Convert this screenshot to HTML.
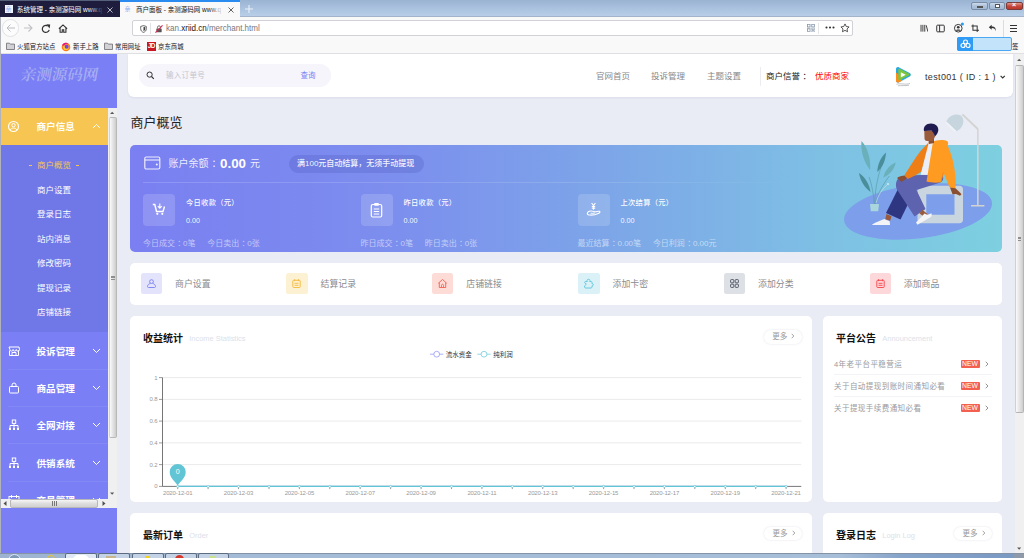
<!DOCTYPE html>
<html lang="zh-CN">
<head>
<meta charset="utf-8">
<title>商户面板 - 亲测源码网</title>
<style>
*{box-sizing:border-box;margin:0;padding:0}
html,body{width:1024px;height:558px;overflow:hidden;background:#e9ebf5;font-family:"Liberation Sans","Noto Sans CJK SC",sans-serif;}
body{position:relative}
.abs{position:absolute}
.t{position:absolute;white-space:nowrap;line-height:1}
/* ---------- browser chrome ---------- */
#titlebar{left:0;top:0;width:1024px;height:17.300px;background:linear-gradient(#9ab3d2,#a8c0dd 45%,#b8cee8);border-bottom:1px solid #a2b3ca}
#tab1{left:0;top:0;width:120px;height:17px;background:#1e1d3e;border-top:1px solid #55607a}
#tab2{left:120px;top:0;width:119.500px;height:17px;background:#f9f9fa;border-top:2px solid #2a8cf0}
#navbar{left:0;top:17px;width:1024px;height:23px;background:#f9f9fa}
#urlbar{left:132px;top:20px;width:721px;height:16px;background:#fff;border:1px solid #d2d2d6;border-radius:2px}
#bmbar{left:0;top:40px;width:1024px;height:14px;background:#f9f9fa;border-bottom:1px solid #e0e0e4}
/* ---------- page ---------- */
#sidebar{left:1px;top:54px;width:116px;height:499px;background:#7b7ff5;overflow:hidden}
#taskbar{left:0;top:552.600px;width:1024px;height:6px;overflow:hidden;background:linear-gradient(90deg,#9db3cf 0,#a4bbd7 23%,#a7bed9 82%,#86a3c9 88%,#7a99c3 98.900%,#8e9aaa 99.100%)}
.card{position:absolute;background:#fff;border-radius:5px}
.sub{position:absolute;left:36px;color:#fff;font-size:8.5px;line-height:1;white-space:nowrap}
.mm{position:absolute;left:35.500px;color:#fff;font-size:9.6px;font-weight:bold;line-height:1;white-space:nowrap}
.sep{position:absolute;left:7px;width:100px;height:1px;background:rgba(255,255,255,.07)}
</style>
</head>
<body>
<!-- BROWSER CHROME -->
<div class="abs" id="titlebar">
 <!-- window buttons -->
 <div class="abs" style="left:971px;top:1.500px;width:16.500px;height:8.500px;border:1px solid #7a8ca6;border-radius:2px;background:linear-gradient(#cddaeb,#adc1da 50%,#a3b8d3)"><div class="abs" style="left:5px;top:3px;width:6px;height:2px;background:#fff;border:.5px solid #555"></div></div>
 <div class="abs" style="left:989px;top:1.500px;width:16px;height:8.500px;border:1px solid #7a8ca6;border-radius:2px;background:linear-gradient(#cddaeb,#adc1da 50%,#a3b8d3)"><div class="abs" style="left:5px;top:1px;width:5px;height:4px;border:1px solid #555;background:#fff"></div></div>
 <div class="abs" style="left:1006px;top:1.500px;width:17px;height:8.500px;border:1px solid #7a3a36;border-radius:2px;background:linear-gradient(#e19a90,#c6483a 50%,#b8382b)"><div class="t" style="left:5px;top:-1.5px;font-size:7px;font-weight:bold;color:#fff">×</div></div>
 <svg class="abs" style="left:244.500px;top:4.800px" width="8" height="8" viewBox="0 0 8 8"><path d="M4 0V8M0 4H8" stroke="#eaf1fa" stroke-width="1.050"/></svg>
</div>
<div class="abs" id="tab1">
 <div class="abs" style="left:5px;top:4px;width:8px;height:8px;background:#eef3ff"></div><div class="t" style="left:5.5px;top:5px;font-size:6px;color:#8fb0f0">亲</div>
 <div class="t" style="left:17px;top:5.500px;font-size:6.5px;color:#fff">系统管理 - 亲测源码网 www.q</div>
 <div class="abs" style="left:88px;top:2px;width:16px;height:13px;background:linear-gradient(90deg,rgba(30,29,62,0),#1e1d3e)"></div>
 <svg class="abs" style="left:107px;top:6px" width="6" height="6" viewBox="0 0 6 6"><path d="M.5 .5L5.5 5.5M5.5 .5L.5 5.5" stroke="#e8e8f0" stroke-width=".75" fill="none"/></svg>
</div>
<div class="abs" id="tab2">
 <div class="t" style="left:4.5px;top:4px;font-size:6px;color:#8fb0f0">亲</div>
 <div class="t" style="left:16px;top:4.500px;font-size:6.5px;color:#111">商户面板 - 亲测源码网 www.q</div>
 <div class="abs" style="left:88px;top:1px;width:16px;height:13px;background:linear-gradient(90deg,rgba(249,249,250,0),#f9f9fa)"></div>
 <svg class="abs" style="left:108px;top:5px" width="6" height="6" viewBox="0 0 6 6"><path d="M.5 .5L5.5 5.5M5.5 .5L.5 5.5" stroke="#333" stroke-width=".75" fill="none"/></svg>
</div>
<div class="abs" id="navbar">
 <!-- back -->
 <div class="abs" style="left:2px;top:2.200px;width:17.400px;height:17.400px;border:1px solid #e2e2e6;border-radius:50%;background:#fcfcfd"></div>
 <svg class="abs" style="left:6px;top:6px" width="10" height="10" viewBox="0 0 10 10"><path d="M9 5H1.5M4.5 1.5L1 5l3.500 3.500" stroke="#bcbcc1" stroke-width="1" fill="none"/></svg>
 <svg class="abs" style="left:23px;top:6px" width="10" height="10" viewBox="0 0 10 10"><path d="M1 5h7.500M5.500 1.500L9 5 5.500 8.500" stroke="#c2c2c6" stroke-width="1.100" fill="none"/></svg>
 <!-- reload -->
 <svg class="abs" style="left:41px;top:6.500px" width="10" height="10" viewBox="0 0 10 10"><path d="M8.200 5.800A3.500 3.500 0 1 1 6.600 1.900" stroke="#333" stroke-width="1.200" fill="none"/><path d="M5.300 .2L9.200 .6 8.600 4.400z" fill="#333"/></svg>
 <!-- home -->
 <svg class="abs" style="left:57.500px;top:6.700px" width="10" height="9.100" viewBox="0 0 11 10"><path d="M1 5.200L5.500 1 10 5.200M2.300 4.500V9h2.400V6.300h1.600V9h2.400V4.500" stroke="#333" stroke-width="1.200" fill="none"/></svg>
 <!-- right icons -->
 <svg class="abs" style="left:919.500px;top:7px" width="8.500" height="8.500" viewBox="0 0 10 10"><path d="M1.200 1v8M3.400 1v8M5.600 1v8M7.300 1.500L9.300 9" stroke="#333" stroke-width="1.100" fill="none"/></svg>
 <svg class="abs" style="left:936px;top:6.500px" width="9" height="9" viewBox="0 0 10 10"><rect x=".8" y="1.300" width="8.400" height="7.400" rx="1" stroke="#333" stroke-width="1.100" fill="none"/><path d="M4 1.300v7.400" stroke="#333" stroke-width="1.100"/></svg>
 <svg class="abs" style="left:953px;top:5px" width="11.500" height="11.500" viewBox="0 0 12 12"><circle cx="5.500" cy="6.500" r="4" stroke="#333" stroke-width="1" fill="none"/><circle cx="5.500" cy="5.500" r="1.400" fill="#333"/><path d="M2.800 9.200c.5-1.800 4.900-1.800 5.400 0" fill="#333"/><circle cx="9.800" cy="2" r="1.600" fill="#2a9df4"/></svg>
 <svg class="abs" style="left:970.500px;top:7px" width="8.500" height="8.500" viewBox="0 0 11 11"><path d="M2.500 .5v7.500h8M.5 2.500h7.500v8" stroke="#333" stroke-width="1.300" fill="none"/></svg>
 <svg class="abs" style="left:987.500px;top:7px" width="9" height="8.200" viewBox="0 0 11 10"><path d="M4.500 1L1 4l3.500 3V5c3 0 4.500 1 4.800 4 .8-4-1-6-4.800-6z" fill="#333"/></svg>
 <div class="abs" style="left:1003px;top:3px;width:1px;height:17px;background:#dcdce0"></div>
 <div class="abs" style="left:1010px;top:7.500px;width:7px;height:1.100px;background:#333"></div><div class="abs" style="left:1010px;top:10.500px;width:7px;height:1.100px;background:#333"></div><div class="abs" style="left:1010px;top:13.500px;width:7px;height:1.100px;background:#333"></div>
</div>
<div class="abs" id="urlbar">
 <svg class="abs" style="left:6.500px;top:3.500px" width="7" height="8" viewBox="0 0 8 9"><path d="M4 .6l3.200 1v2.600C7.200 6.400 5.800 7.800 4 8.400 2.200 7.800.8 6.400.8 4.200V1.600z" stroke="#444" stroke-width=".9" fill="none"/><path d="M4 2v5c1.200-.5 2-1.500 2-3V2.600z" fill="#444"/></svg>
 <div class="abs" style="left:17px;top:2px;width:1px;height:11px;background:#e2e2e6"></div>
 <svg class="abs" style="left:21.500px;top:3.500px" width="8" height="8" viewBox="0 0 9 9"><rect x="1.500" y="3.800" width="6" height="4.400" rx=".6" fill="#555"/><path d="M2.800 3.800V2.600a1.700 1.700 0 0 1 3.400 0v1.200" stroke="#555" stroke-width=".9" fill="none"/><path d="M.5 8.500L8.500 .5" stroke="#e22850" stroke-width="1.200"/></svg>
 <div class="t" style="left:33px;top:2.700px;font-size:8.700px;color:#77777c;transform:scaleX(.925);transform-origin:0 50%">kan.<span style="color:#15141a">xriid.cn</span>/merchant.html</div>
 <!-- qr -->
 <svg class="abs" style="left:674.200px;top:3.300px" width="7.800" height="7.800" viewBox="0 0 9 9" fill="#8b99ad"><path d="M0 0h4v4H0zM1 1v2h2V1zM5 0h4v4H5zM6 1v2h2V1zM0 5h4v4H0zM1 6v2h2V6zM5 5h1.500v1.500H5zM7.500 5H9v1.500H7.500zM6.200 6.300h1.500v1.500H6.200zM5 7.500h1.500V9H5zM7.500 7.500H9V9H7.500z"/></svg>
 <div class="abs" style="left:685px;top:2px;width:1px;height:11px;background:#e6e6ea"></div>
 <svg class="abs" style="left:691.800px;top:5.400px" width="10" height="3" viewBox="0 0 10 3"><circle cx="1.500" cy="1.500" r="1.050" fill="#333"/><circle cx="5" cy="1.500" r="1.050" fill="#333"/><circle cx="8.500" cy="1.500" r="1.050" fill="#333"/></svg>
 <svg class="abs" style="left:707px;top:2px" width="10" height="10" viewBox="0 0 11 11"><path d="M5.500 1l1.400 2.900 3.100.4-2.300 2.200.6 3.100-2.800-1.500-2.800 1.500.6-3.100L1 4.300l3.100-.4z" stroke="#333" stroke-width=".9" fill="none" stroke-linejoin="round"/></svg>
</div>
<div class="abs" id="bmbar">
 <svg class="abs" style="left:6px;top:2.300px" width="9" height="8" viewBox="0 0 9 8"><path d="M.5 1.200h3l.8.900h4.200v5.400h-8z" fill="#d2d2d6" stroke="#6c6c70" stroke-width=".8"/></svg>
 <div class="t" style="left:17px;top:3.600px;font-size:6.4px;color:#15141a">火狐官方站点</div>
 <svg class="abs" style="left:61px;top:2px" width="10" height="10" viewBox="0 0 10 10"><circle cx="5" cy="5" r="4.300" fill="#ff7a1a"/><circle cx="5" cy="5.300" r="2.800" fill="#ffcf2e"/><circle cx="5.600" cy="4.700" r="2" fill="#7542e5"/><path d="M1 3.500c1-2.500 4-3.500 6.500-1.800-2-.3-3.500.4-4 1.800z" fill="#e31587"/></svg>
 <div class="t" style="left:73px;top:3.600px;font-size:6.4px;color:#15141a">新手上路</div>
 <svg class="abs" style="left:104px;top:2.300px" width="9" height="8" viewBox="0 0 9 8"><path d="M.5 1.200h3l.8.900h4.200v5.400h-8z" fill="#d2d2d6" stroke="#6c6c70" stroke-width=".8"/></svg>
 <div class="t" style="left:115px;top:3.600px;font-size:6.4px;color:#15141a">常用网址</div>
 <div class="abs" style="left:147px;top:2px;width:9px;height:9px;background:#c91623"></div><div class="t" style="left:147.700px;top:3.200px;font-size:6.500px;font-weight:bold;color:#fff;letter-spacing:-.5px">JD</div>
 <div class="t" style="left:158px;top:3.600px;font-size:6.4px;color:#15141a">京东商城</div>
 <!-- cloud extension badge -->
 <div class="abs" style="left:957px;top:-3px;width:55px;height:14px;border-radius:2px;background:#c3e3fb;border:1px solid #4aa8f5"></div>
 <div class="abs" style="left:957px;top:-3px;width:16px;height:14px;border-radius:2px 0 0 2px;background:#2f9bf5"></div>
 <svg class="abs" style="left:960px;top:-1px" width="11" height="10" viewBox="0 0 11 10"><circle cx="5.500" cy="3" r="2" stroke="#fff" stroke-width="1.200" fill="none"/><circle cx="3" cy="6.500" r="2" stroke="#fff" stroke-width="1.200" fill="none"/><circle cx="8" cy="6.500" r="2" stroke="#fff" stroke-width="1.200" fill="none"/></svg>
 <div class="t" style="left:1012px;top:3.600px;font-size:6.4px;color:#15141a">签</div>
</div>
<!-- PAGE -->
<div class="abs" id="sidebar">
 <!-- logo -->
 <div class="t" style="left:20px;top:12.500px;font-size:15.500px;font-family:'Liberation Serif','Noto Serif CJK SC',serif;color:rgba(196,208,240,.6);transform:skewX(-10deg);letter-spacing:0;font-weight:600">亲测源码网</div>
 <!-- active main -->
 <div class="abs" style="left:0;top:54px;width:107px;height:37px;background:#f7c552"></div>
 <svg class="abs" style="left:6px;top:66px" width="13" height="13" viewBox="0 0 13 13"><circle cx="6.500" cy="6.500" r="5" stroke="#fff" stroke-width="1.100" fill="none"/><circle cx="6.500" cy="5.200" r="1.700" stroke="#fff" stroke-width="1" fill="none"/><path d="M3.300 10c.4-2.600 6-2.600 6.400 0" stroke="#fff" stroke-width="1" fill="none"/></svg>
 <div class="mm" style="top:67.500px">商户信息</div>
 <svg class="abs" style="left:91px;top:69px" width="9" height="6" viewBox="0 0 9 6"><path d="M1 5L4.500 1.500 8 5" stroke="#fff" stroke-width="1" fill="none"/></svg>
 <!-- submenu -->
 <div class="abs" style="left:0;top:91px;width:107px;height:187px;background:#7078e8"></div>
 <div class="sub" style="top:107px;color:#f7c552">商户概览</div>
 <div class="abs" style="left:28px;top:111px;width:3px;height:1px;background:#f7c552"></div><div class="abs" style="left:75px;top:111px;width:3px;height:1px;background:#f7c552"></div>
 <div class="sub" style="top:131.500px">商户设置</div>
 <div class="sub" style="top:156px">登录日志</div>
 <div class="sub" style="top:180.500px">站内消息</div>
 <div class="sub" style="top:205px">修改密码</div>
 <div class="sub" style="top:229.500px">提现记录</div>
 <div class="sub" style="top:254px">店铺链接</div>
 <!-- main items -->
 <svg class="abs" style="left:7px;top:291px" width="12" height="12" viewBox="0 0 12 12"><path d="M1.500 5.500V10.500h9V5.500M1 2h10l.5 2.500a1.600 1.600 0 0 1-3.200 0 1.600 1.600 0 0 1-3.200 0 1.600 1.600 0 0 1-3.200 0zM4 10.500V7.500h4v3" stroke="#fff" stroke-width="1" fill="none"/></svg>
 <div class="mm" style="top:292.500px">投诉管理</div>
 <svg class="abs" style="left:91px;top:294px" width="9" height="6" viewBox="0 0 9 6"><path d="M1 1l3.500 3.500L8 1" stroke="#fff" stroke-width="1" fill="none"/></svg>
 <div class="sep" style="top:315px"></div>
 <svg class="abs" style="left:7px;top:328px" width="12" height="12" viewBox="0 0 12 12"><rect x="1.500" y="4.500" width="9" height="6.500" rx=".8" stroke="#fff" stroke-width="1" fill="none"/><path d="M4 4.500V3a2 2 0 0 1 4 0v1.500" stroke="#fff" stroke-width="1" fill="none"/></svg>
 <div class="mm" style="top:329.500px">商品管理</div>
 <svg class="abs" style="left:91px;top:331px" width="9" height="6" viewBox="0 0 9 6"><path d="M1 1l3.500 3.500L8 1" stroke="#fff" stroke-width="1" fill="none"/></svg>
 <div class="sep" style="top:352px"></div>
 <svg class="abs" style="left:7px;top:365px" width="12" height="12" viewBox="0 0 12 12"><rect x="4.300" y="1" width="3.400" height="3.400" stroke="#fff" stroke-width="1" fill="none"/><path d="M6 4.400V6.500M2 9V6.500h8V9M6 6.500V9" stroke="#fff" stroke-width="1" fill="none"/><rect x="1" y="9" width="2" height="2" fill="#fff"/><rect x="5" y="9" width="2" height="2" fill="#fff"/><rect x="9" y="9" width="2" height="2" fill="#fff"/></svg>
 <div class="mm" style="top:366.500px">全网对接</div>
 <svg class="abs" style="left:91px;top:368px" width="9" height="6" viewBox="0 0 9 6"><path d="M1 1l3.500 3.500L8 1" stroke="#fff" stroke-width="1" fill="none"/></svg>
 <div class="sep" style="top:389px"></div>
 <svg class="abs" style="left:7px;top:403px" width="12" height="12" viewBox="0 0 12 12"><rect x="4.300" y="1" width="3.400" height="3.400" stroke="#fff" stroke-width="1" fill="none"/><path d="M6 4.400V6.500M2 9V6.500h8V9M6 6.500V9" stroke="#fff" stroke-width="1" fill="none"/><rect x="1" y="9" width="2" height="2" fill="#fff"/><rect x="5" y="9" width="2" height="2" fill="#fff"/><rect x="9" y="9" width="2" height="2" fill="#fff"/></svg>
 <div class="mm" style="top:404.500px">供销系统</div>
 <svg class="abs" style="left:91px;top:406px" width="9" height="6" viewBox="0 0 9 6"><path d="M1 1l3.500 3.500L8 1" stroke="#fff" stroke-width="1" fill="none"/></svg>
 <div class="sep" style="top:427px"></div>
 <svg class="abs" style="left:7px;top:440px" width="12" height="12" viewBox="0 0 12 12"><rect x="1" y="2.500" width="10" height="8" stroke="#fff" stroke-width="1" fill="none"/><path d="M3.500 1v3M8.500 1v3M1 6h10" stroke="#fff" stroke-width="1" fill="none"/></svg>
 <div class="mm" style="top:441.500px">交易管理</div>
 <svg class="abs" style="left:91px;top:443px" width="9" height="6" viewBox="0 0 9 6"><path d="M1 1l3.500 3.500L8 1" stroke="#fff" stroke-width="1" fill="none"/></svg>
 <!-- vertical scrollbar of sidebar -->
 <div class="abs" style="left:107px;top:54px;width:9px;height:391px;background:#f0f0f0"></div>
 <div class="abs" style="left:108px;top:63px;width:8px;height:321px;border:1px solid #b8b8b8;border-left-color:#d4d4d4;border-radius:2px;background:linear-gradient(90deg,#fafafa,#e4e4e4 45%,#cdcdcd)"></div>
 <svg class="abs" style="left:109px;top:57px" width="4.400" height="3.500" viewBox="0 0 5 4"><path d="M0 3.500L2.500 .8 5 3.500z" fill="#5a5a5a"/></svg>
 <svg class="abs" style="left:109px;top:438px" width="4.400" height="3.500" viewBox="0 0 5 4"><path d="M0 .5L2.500 3.200 5 .5z" fill="#5a5a5a"/></svg>
 <div class="abs" style="left:110px;top:221.500px;width:3.500px;height:.8px;background:#8e8e8e"></div><div class="abs" style="left:110px;top:223px;width:3.500px;height:.8px;background:#8e8e8e"></div><div class="abs" style="left:110px;top:224.500px;width:3.500px;height:.8px;background:#8e8e8e"></div>
 <!-- horizontal scrollbar -->
 <div class="abs" style="left:0;top:445px;width:116px;height:9px;background:#f0f0f0"></div>
 <div class="abs" style="left:9px;top:445px;width:88px;height:9px;border:1px solid #b8b8b8;border-radius:2px;background:linear-gradient(#f6f6f6,#dedede 50%,#d0d0d0)"></div>
 <svg class="abs" style="left:2px;top:447px" width="4" height="5" viewBox="0 0 4 5"><path d="M3.500 0L.5 2.500 3.500 5z" fill="#505050"/></svg>
 <svg class="abs" style="left:101px;top:447px" width="4" height="5" viewBox="0 0 4 5"><path d="M.5 0L3.500 2.500 .5 5z" fill="#505050"/></svg>
 <div class="abs" style="left:51px;top:447px;width:1px;height:5px;background:#777"></div><div class="abs" style="left:53px;top:447px;width:1px;height:5px;background:#777"></div><div class="abs" style="left:55px;top:447px;width:1px;height:5px;background:#777"></div>
</div>
<div class="card" id="header" style="left:128px;top:54px;width:885px;height:43px;border-radius:0 0 6px 6px;box-shadow:0 1px 2px rgba(150,155,190,.15)">
 <div class="abs" style="left:10.500px;top:9.500px;width:192px;height:23.500px;border-radius:12px;background:#f5f5fb"></div>
 <svg class="abs" style="left:18px;top:16.500px" width="9" height="9" viewBox="0 0 9 9"><circle cx="3.600" cy="3.600" r="2.600" stroke="#333" stroke-width="1" fill="none"/><path d="M5.500 5.500L7.800 7.800" stroke="#333" stroke-width="1.100"/></svg>
 <div class="t" style="left:38px;top:17.500px;font-size:7.500px;color:#c4c4cc;letter-spacing:.3px">输入订单号</div>
 <div class="t" style="left:172.500px;top:17.500px;font-size:7.500px;color:#7b7ff5">查询</div>
 <div class="t" style="left:468px;top:18px;font-size:8.500px;color:#888">官网首页</div>
 <div class="t" style="left:523px;top:18px;font-size:8.500px;color:#888">投诉管理</div>
 <div class="t" style="left:579px;top:18px;font-size:8.500px;color:#888">主题设置</div>
 <div class="abs" style="left:632px;top:13px;width:1px;height:19px;background:#ececf2"></div>
 <div class="t" style="left:638px;top:18px;font-size:8.500px;color:#222">商户信誉<span style="position:relative;left:2.500px">：</span></div>
 <div class="t" style="left:687px;top:18px;font-size:8.500px;color:#f00">优质商家</div>
 <!-- avatar -->
 <svg class="abs" style="left:767px;top:12px" width="17" height="21" viewBox="0 0 17 21"><path d="M1 3.200C1 1.400 2.600.6 4.100 1.400l10.600 5.700c1.500.8 1.500 2.600 0 3.400L4.100 16.200c-1.500.8-3.100 0-3.100-1.800z" fill="#2aa7e1"/><path d="M1 6.500c2.500 1.500 5 4.500 6 8.200l-2.900 1.500c-1.500.8-3.100 0-3.100-1.800z" fill="#ff8c1a"/><path d="M3.300 3.600c0-.7.700-1.100 1.300-.8l9 4.800c.8.400.8 1.400 0 1.800l-9 4.800c-.6.300-1.300-.1-1.300-.8z" fill="#7cc53d"/><path d="M5.800 6.200v5.200l4.900-2.600z" fill="#fff"/><path d="M1.500 18.300c2-.8 4-.5 6.500-.3s4.500.3 7-.5M3 19.800c3-.5 7 .2 11-.6" stroke="#b9bcc2" stroke-width=".9" fill="none"/></svg>
 <div class="t" style="left:797px;top:18.500px;font-size:9px;letter-spacing:.35px;color:#333">test001 ( ID : 1 )</div>
 <svg class="abs" style="left:872.300px;top:21.300px" width="5.400" height="4" viewBox="0 0 5.400 4"><path d="M.6 .8L2.700 2.900 4.800 .8" stroke="#333" stroke-width="1.150" fill="none"/></svg>
</div>
<div class="t" style="left:130.500px;top:115.500px;font-size:13px;color:#222">商户概览</div>
<div class="abs" id="banner" style="left:130px;top:145px;width:872px;height:106.500px;border-radius:5px;background:linear-gradient(90deg,#7a7ff1 0%,#7c8eee 30%,#7da6e8 55%,#7ec0e4 80%,#7dd0e0 100%)">
 <!-- wallet -->
 <svg class="abs" style="left:14px;top:10.500px" width="17" height="14" viewBox="0 0 17 14"><rect x=".8" y="1" width="15" height="12" rx="1.500" stroke="#fff" stroke-opacity=".85" stroke-width="1.200" fill="none"/><path d="M.8 4h15" stroke="#fff" stroke-opacity=".85" stroke-width="1.100"/><circle cx="12.800" cy="8.500" r="1" fill="#fff" fill-opacity=".9"/></svg>
 <div class="t" style="left:38.500px;top:13.500px;font-size:10px;color:rgba(255,255,255,.88)">账户余额<span style="position:relative;left:3px">：</span></div>
 <div class="t" style="left:90px;top:11.500px;font-size:13.400px;font-weight:bold;color:#fff">0.00</div>
 <div class="t" style="left:120px;top:13.500px;font-size:10px;color:rgba(255,255,255,.88)">元</div>
 <div class="abs" style="left:159px;top:9.500px;width:135px;height:18.500px;border-radius:10px;background:rgba(60,70,170,.2)"></div>
 <div class="t" style="left:167px;top:14.500px;font-size:8px;font-weight:500;color:rgba(255,255,255,.92)">满100元自动结算，无须手动提现</div>
 <div class="abs" style="left:13px;top:37px;width:660px;height:1px;background:linear-gradient(90deg,rgba(255,255,255,.16),rgba(255,255,255,.12) 70%,rgba(255,255,255,0))"></div>
 <!-- col 1 -->
 <div class="abs" style="left:13px;top:49px;width:32px;height:32px;border-radius:4px;background:rgba(255,255,255,.16)"></div>
 <svg class="abs" style="left:22px;top:57px" width="14" height="14" viewBox="0 0 14 14"><path d="M.8 2.500h2l1.700 7h6.500l1.500-5" stroke="#fff" stroke-width="1.400" fill="none"/><circle cx="5.300" cy="11.800" r="1.100" fill="#fff"/><circle cx="10.300" cy="11.800" r="1.100" fill="#fff"/><path d="M7.800 1.500v4.500M5.800 4.200l2 2 2-2" stroke="#fff" stroke-width="1.100" fill="none"/></svg>
 <div class="t" style="left:56px;top:54px;font-size:7.300px;font-weight:500;letter-spacing:.25px;color:rgba(255,255,255,.97)">今日收款（元）</div>
 <div class="t" style="left:56px;top:72px;font-size:7.200px;color:rgba(255,255,255,.95)">0.00</div>
 <div class="t" style="left:13px;top:95px;font-size:8px;color:rgba(255,255,255,.56)">今日成交<span style="position:relative;left:2.300px">：</span>0笔<span style="margin-left:11.800px">今日卖出<span style="position:relative;left:2.300px">：</span>0张</span></div>
 <!-- col 2 -->
 <div class="abs" style="left:230.500px;top:49px;width:32px;height:32px;border-radius:4px;background:rgba(255,255,255,.16)"></div>
 <svg class="abs" style="left:240px;top:56.500px" width="13" height="16" viewBox="0 0 13 16"><rect x="1.300" y="2.500" width="10.400" height="12.500" rx="1.500" stroke="#fff" stroke-width="1.200" fill="none"/><rect x="4.300" y="1" width="4.400" height="2.800" rx=".6" fill="#fff"/><path d="M3.800 7h5.400M3.800 9.500h5.400M3.800 12h5.400" stroke="#fff" stroke-width="1"/></svg>
 <div class="t" style="left:273.500px;top:54px;font-size:7.300px;font-weight:500;letter-spacing:.25px;color:rgba(255,255,255,.97)">昨日收款（元）</div>
 <div class="t" style="left:273.500px;top:72px;font-size:7.200px;color:rgba(255,255,255,.95)">0.00</div>
 <div class="t" style="left:230.500px;top:95px;font-size:8px;color:rgba(255,255,255,.56)">昨日成交<span style="position:relative;left:2.300px">：</span>0笔<span style="margin-left:11.800px">昨日卖出<span style="position:relative;left:2.300px">：</span>0张</span></div>
 <!-- col 3 -->
 <div class="abs" style="left:447.500px;top:49px;width:32px;height:32px;border-radius:4px;background:rgba(255,255,255,.16)"></div>
 <svg class="abs" style="left:456px;top:56.500px" width="15" height="15" viewBox="0 0 15 15"><path d="M5.600 1L7.500 3.600 9.400 1M7.500 3.600V7.800M5.800 4.600h3.400M5.800 6.200h3.400" stroke="#fff" stroke-width="1.050" fill="none"/><path d="M1.300 11.500c.3-1.900 2.500-2.600 4.500-2.400 1.500.1 2.500.6 3.500.6 1.500 0 3-.9 4.200-.4.900.5.300 1.500-.7 1.900-2.500 1.200-5.500 2-8.500 1.900-1.600-.1-3.100-.5-3-1.600z" stroke="#fff" stroke-width="1.050" fill="none"/><path d="M4.500 11.200c1.500.3 3.200.2 4.800-.3" stroke="#fff" stroke-width=".9" fill="none"/></svg>
 <div class="t" style="left:490.500px;top:54px;font-size:7.300px;font-weight:500;letter-spacing:.25px;color:rgba(255,255,255,.97)">上次结算（元）</div>
 <div class="t" style="left:490.500px;top:72px;font-size:7.200px;color:rgba(255,255,255,.95)">0.00</div>
 <div class="t" style="left:447.500px;top:95px;font-size:8px;color:rgba(255,255,255,.56)">最近结算<span style="position:relative;left:2.300px">：</span>0.00笔<span style="margin-left:11.800px">今日利润<span style="position:relative;left:2.300px">：</span>0.00元</span></div>
</div>
<svg class="abs" id="illus" style="left:840px;top:100px" width="172" height="152" viewBox="840 100 172 152">
 <ellipse cx="918" cy="211.500" rx="74.500" ry="27" transform="rotate(-7 918 211.500)" fill="#7d9feb"/>
 <!-- lamp -->
 <path d="M961.500 114.800L963.300 114l14.600 13.800c.5.500.7 1 .7 1.700V205.500h-1.500V129.800z" fill="#d3d4d2"/>
 <rect x="971" y="205" width="13.500" height="1.600" rx=".6" fill="#d3d4d2"/>
 <path d="M946.300 121.500c2.500-6 9.500-8.500 14-6.200 3 1.600 3.800 6 2.300 9.700-1.200 2.800-3.300 5-6 6.200z" fill="#c7d5de"/>
 <path d="M946.300 121.500l10.300 9.700c-1 .5-2 .3-3-.3l-6.800-6.400c-.8-.8-1-1.900-.5-3z" fill="#eef3f6"/>
 <!-- plant -->
 <path d="M870 204h9l-.8 7.300h-7.400z" fill="#a9d6dd"/>
 <path d="M874.200 204c-.5-9-2-18-5-27M874.800 204c.2-12 2-24 6-36M875.300 204c2-10 8-20 14-28" stroke="#5a9ea9" stroke-width=".7" fill="none"/>
 <path d="M861.500 141c-1 8 1.500 20 8.500 29 1-10-2-22-8.500-29z" fill="#6ab0ba"/>
 <path d="M886 152.500c-5 4-8.500 12-8.800 19.500 5-4 8.500-11.500 8.800-19.500z" fill="#4b8e9b"/>
 <path d="M895.800 162.500c-6 2-11 8-12.500 15 6-2.500 11-8 12.500-15z" fill="#6ab0ba"/>
 <path d="M859 173c1 7 5 14 11.500 19-1-7.500-5-14.500-11.500-19z" fill="#4b8e9b"/>
 <path d="M876 203c2-8 6-14 11.500-18.500" stroke="#cfe6ea" stroke-width=".6" fill="none"/><circle cx="888" cy="184" r="1.100" fill="#cfe6ea"/>
 <!-- stool -->
 <path d="M921 185.800h38.500c2 0 3.500 1.500 3.500 3.500v30.500c0 2-1.500 3.500-3.500 3.500H921c-2 0-3.500-1.500-3.500-3.500v-30.500c0-2 1.500-3.500 3.500-3.500zM926.300 194.200v20.600h28.200v-20.600z" fill="#c9d6df" fill-rule="evenodd"/>
 <!-- back leg (dark) -->
 <path d="M898 189l14 7-11.500 23.500-14.500-6.500z" fill="#2f3681"/>
 <path d="M886.500 214l5 2.300-1.300 4.500-5-1.500z" fill="#9a5b3c"/>
 <path d="M872.200 224.500c4-2.500 8-4 12-5.500l5.500 2.300.3 3.700h-17.600z" fill="#f4f4f6"/>
 <!-- front leg -->
 <path d="M899 178c10-3 30-4 41-3.500 4 .5 4.500 6 .5 8l-24 7.500 9 19-11 7.500-17.500-27c-2-4-1-9.500 2-11.500z" fill="#5d63af"/>
 <path d="M922 209.500l5.500 4.500-3 3-5-3.500z" fill="#9a5b3c"/>
 <path d="M916 222.500c3-3 6-6 8.500-9l3 1.500 3.800-1.700c.7 1.300.5 2.700-.5 3.700l-13.300 7.700z" fill="#f4f4f6"/>
 <!-- left arm/hand -->
 <path d="M897 178c1.500-1.500 5-2.500 8-2.500l1.500 3-5 3.500z" fill="#8a4f33"/>
 <!-- jacket -->
 <path d="M929.500 141.500L921 150.500C915 158 910 167 904.500 175l3 4c4.500-2 9.500-4.500 14-7.500l8.500-29z" fill="#ee7f17"/>
 <path d="M929 141.500h4.500L928.500 175l-7.900-.2z" fill="#eceef5"/>
 <path d="M933 141.500c3-1.500 10-2.500 14-.5 1.500 1 1.500 3 .5 4.500 4 8 7.500 21 8.300 35.500l-.5 7.500-5.800-1.300-6-14.500-2.500 9.500c-4.500.8-10.500.5-14.500-.7z" fill="#ff9b21"/>
 <path d="M943.300 172.500l-2.300 9.500" stroke="#ee7f17" stroke-width=".8"/>
 <!-- right hand -->
 <path d="M950 187.500l5.500.8c2 2 4.500 4 6 6l-1.500 1.500-4-1.800-3.500.300z" fill="#8a4f33"/>
 <!-- head -->
 <path d="M928 137h6v6l-5 1z" fill="#8a4f33"/>
 <path d="M924.300 130.500h9.500l1.200 6-2 4.500h-6c-1.500 0-2.500-1-2.500-2.500z" fill="#9a5b3c"/>
 <path d="M924 131c-1-4 2-7.500 7-7.500 4.500 0 7.800 3 7.300 7-.3 2.500-2 4.500-3.300 6l-1.500-3.500-2-2.500z" fill="#1f1a50"/>
</svg>
<div class="card" id="quick" style="left:130px;top:262.500px;width:872px;height:42px">
 <div class="abs" style="left:10.75px;top:10.500px;width:21.300px;height:21.300px;border-radius:2.500px;background:#e3e3fc"></div>
 <svg class="abs" style="left:15.90px;top:15.650px" width="11" height="11" viewBox="0 0 11 11"><circle cx="5.500" cy="3.600" r="1.900" stroke="#7b7ff5" stroke-width=".9" fill="none"/><path d="M4.300 5.200C3 6 1.500 6.800 1.500 8.500c0 .6.400 1 1 1h6c.6 0 1-.4 1-1 0-1.700-1.500-2.500-2.800-3.300" stroke="#7b7ff5" stroke-width=".9" fill="none"/></svg>
 <div class="t" style="left:45.05px;top:17px;font-size:8.900px;color:#8a8a8e">商户设置</div>
 <div class="abs" style="left:156.25px;top:10.500px;width:21.300px;height:21.300px;border-radius:2.500px;background:#fdf1d3"></div>
 <svg class="abs" style="left:161.40px;top:15.650px" width="11" height="11" viewBox="0 0 11 11"><rect x="1.800" y="2.300" width="7.400" height="7.200" rx=".8" stroke="#f5b93a" stroke-width=".9" fill="none"/><path d="M3.600 1.200v2M7.400 1.200v2M3.500 5.300h4M3.500 7.300h4" stroke="#f5b93a" stroke-width=".9"/></svg>
 <div class="t" style="left:190.55px;top:17px;font-size:8.900px;color:#8a8a8e">结算记录</div>
 <div class="abs" style="left:302.00px;top:10.500px;width:21.300px;height:21.300px;border-radius:2.500px;background:#fddcd8"></div>
 <svg class="abs" style="left:307.15px;top:15.650px" width="11" height="11" viewBox="0 0 11 11"><path d="M1.300 5.300L5.500 1.500l4.200 3.800M2.300 4.600v4.900h6.400V4.600" stroke="#f4604f" stroke-width=".9" fill="none" stroke-linejoin="round"/><path d="M4.500 9.500V7.200c0-1.300 2-1.300 2 0v2.300" stroke="#f4604f" stroke-width=".8" fill="none"/></svg>
 <div class="t" style="left:336.30px;top:17px;font-size:8.900px;color:#8a8a8e">店铺链接</div>
 <div class="abs" style="left:448.25px;top:10.500px;width:21.300px;height:21.300px;border-radius:2.500px;background:#daf1f7"></div>
 <svg class="abs" style="left:453.40px;top:15.650px" width="11" height="11" viewBox="0 0 11 11"><path d="M4 2.600c0-1.800 3-1.800 3 0l-.3.900H8c.6 0 1 .4 1 1v1.200c1.700-.3 1.700 2.400 0 2.100V9c0 .6-.4 1-1 1H2.600c-.6 0-1-.4-1-1V7.800l1.700-1.600-1.700-1.500v-.2c0-.6.400-1 1-1h1.700z" stroke="#5cc5d8" stroke-width=".9" fill="none" stroke-linejoin="round"/></svg>
 <div class="t" style="left:482.55px;top:17px;font-size:8.900px;color:#8a8a8e">添加卡密</div>
 <div class="abs" style="left:593.75px;top:10.500px;width:21.300px;height:21.300px;border-radius:2.500px;background:#dde1e6"></div>
 <svg class="abs" style="left:598.90px;top:15.650px" width="11" height="11" viewBox="0 0 11 11"><rect x="1.600" y="1.600" width="3.200" height="3.200" rx=".7" stroke="#4a4f5c" stroke-width=".9" fill="none"/><rect x="6.200" y="1.600" width="3.200" height="3.200" rx=".7" stroke="#4a4f5c" stroke-width=".9" fill="none"/><rect x="1.600" y="6.200" width="3.200" height="3.200" rx=".7" stroke="#4a4f5c" stroke-width=".9" fill="none"/><rect x="6.200" y="6.200" width="3.200" height="3.200" rx=".7" stroke="#4a4f5c" stroke-width=".9" fill="none"/></svg>
 <div class="t" style="left:628.05px;top:17px;font-size:8.900px;color:#8a8a8e">添加分类</div>
 <div class="abs" style="left:739.50px;top:10.500px;width:21.300px;height:21.300px;border-radius:2.500px;background:#fdd8da"></div>
 <svg class="abs" style="left:744.65px;top:15.650px" width="11" height="11" viewBox="0 0 11 11"><rect x="1.800" y="2.300" width="7.400" height="7.200" rx=".8" stroke="#f4434a" stroke-width=".9" fill="none"/><path d="M3.600 1.200v2M7.400 1.200v2M3.500 5.300h4M3.500 7.300h4" stroke="#f4434a" stroke-width=".9"/></svg>
 <div class="t" style="left:773.80px;top:17px;font-size:8.900px;color:#8a8a8e">添加商品</div>
</div>
<div class="card" id="chart" style="left:130px;top:316px;width:681.500px;height:186px">
 <div class="t" style="left:13px;top:17.800px;font-size:10px;font-weight:bold;color:#111">收益统计</div>
 <div class="t" style="left:59.300px;top:19px;font-size:7.450px;color:#dcdfea">Income Statistics</div>
 <div class="abs" style="left:634px;top:14.200px;width:38px;height:13.400px;border-radius:7px;background:#fff;box-shadow:0 0 2.200px rgba(120,125,160,.22)"></div>
 <div class="t" style="left:642.200px;top:17px;font-size:7.500px;color:#999">更多<svg style="margin-left:4.300px;vertical-align:-.3px" width="3.500" height="6" viewBox="0 0 3.500 6"><path d="M.7 .8L2.800 3 .7 5.200" stroke="#999" stroke-width=".9" fill="none"/></svg></div>
 <svg class="abs" style="left:0;top:0" width="681" height="186" viewBox="130 316 681 186" font-family="'Liberation Sans','Noto Sans CJK SC',sans-serif">
<path d="M159.0 486.4H162.5" stroke="#555" stroke-width=".6"/>
<text x="157.5" y="488.4" text-anchor="end" font-size="6" letter-spacing="-.12" fill="#999">0</text>
<path d="M162.5 464.6H801.3" stroke="#dcdcdc" stroke-width=".6"/>
<path d="M159.0 464.6H162.5" stroke="#555" stroke-width=".6"/>
<text x="157.5" y="466.6" text-anchor="end" font-size="6" letter-spacing="-.12" fill="#999">0.2</text>
<path d="M162.5 442.9H801.3" stroke="#dcdcdc" stroke-width=".6"/>
<path d="M159.0 442.9H162.5" stroke="#555" stroke-width=".6"/>
<text x="157.5" y="444.9" text-anchor="end" font-size="6" letter-spacing="-.12" fill="#999">0.4</text>
<path d="M162.5 421.1H801.3" stroke="#dcdcdc" stroke-width=".6"/>
<path d="M159.0 421.1H162.5" stroke="#555" stroke-width=".6"/>
<text x="157.5" y="423.1" text-anchor="end" font-size="6" letter-spacing="-.12" fill="#999">0.6</text>
<path d="M162.5 399.4H801.3" stroke="#dcdcdc" stroke-width=".6"/>
<path d="M159.0 399.4H162.5" stroke="#555" stroke-width=".6"/>
<text x="157.5" y="401.4" text-anchor="end" font-size="6" letter-spacing="-.12" fill="#999">0.8</text>
<path d="M162.5 377.6H801.3" stroke="#dcdcdc" stroke-width=".6"/>
<path d="M159.0 377.6H162.5" stroke="#555" stroke-width=".6"/>
<text x="157.5" y="379.6" text-anchor="end" font-size="6" letter-spacing="-.12" fill="#999">1</text>
<path d="M162.5 377.6V486.4H801.3" stroke="#666" stroke-width=".9" fill="none"/>
<path d="M177.7 486.4v2.700" stroke="#555" stroke-width=".6"/>
<text x="177.7" y="495.4" text-anchor="middle" font-size="6" letter-spacing="-.12" fill="#999">2020-12-01</text>
<path d="M208.1 486.4v2.700" stroke="#555" stroke-width=".6"/>
<path d="M238.5 486.4v2.700" stroke="#555" stroke-width=".6"/>
<text x="238.5" y="495.4" text-anchor="middle" font-size="6" letter-spacing="-.12" fill="#999">2020-12-03</text>
<path d="M269.0 486.4v2.700" stroke="#555" stroke-width=".6"/>
<path d="M299.4 486.4v2.700" stroke="#555" stroke-width=".6"/>
<text x="299.4" y="495.4" text-anchor="middle" font-size="6" letter-spacing="-.12" fill="#999">2020-12-05</text>
<path d="M329.8 486.4v2.700" stroke="#555" stroke-width=".6"/>
<path d="M360.2 486.4v2.700" stroke="#555" stroke-width=".6"/>
<text x="360.2" y="495.4" text-anchor="middle" font-size="6" letter-spacing="-.12" fill="#999">2020-12-07</text>
<path d="M390.6 486.4v2.700" stroke="#555" stroke-width=".6"/>
<path d="M421.1 486.4v2.700" stroke="#555" stroke-width=".6"/>
<text x="421.1" y="495.4" text-anchor="middle" font-size="6" letter-spacing="-.12" fill="#999">2020-12-09</text>
<path d="M451.5 486.4v2.700" stroke="#555" stroke-width=".6"/>
<path d="M481.9 486.4v2.700" stroke="#555" stroke-width=".6"/>
<text x="481.9" y="495.4" text-anchor="middle" font-size="6" letter-spacing="-.12" fill="#999">2020-12-11</text>
<path d="M512.3 486.4v2.700" stroke="#555" stroke-width=".6"/>
<path d="M542.7 486.4v2.700" stroke="#555" stroke-width=".6"/>
<text x="542.7" y="495.4" text-anchor="middle" font-size="6" letter-spacing="-.12" fill="#999">2020-12-13</text>
<path d="M573.2 486.4v2.700" stroke="#555" stroke-width=".6"/>
<path d="M603.6 486.4v2.700" stroke="#555" stroke-width=".6"/>
<text x="603.6" y="495.4" text-anchor="middle" font-size="6" letter-spacing="-.12" fill="#999">2020-12-15</text>
<path d="M634.0 486.4v2.700" stroke="#555" stroke-width=".6"/>
<path d="M664.4 486.4v2.700" stroke="#555" stroke-width=".6"/>
<text x="664.4" y="495.4" text-anchor="middle" font-size="6" letter-spacing="-.12" fill="#999">2020-12-17</text>
<path d="M694.8 486.4v2.700" stroke="#555" stroke-width=".6"/>
<path d="M725.3 486.4v2.700" stroke="#555" stroke-width=".6"/>
<text x="725.3" y="495.4" text-anchor="middle" font-size="6" letter-spacing="-.12" fill="#999">2020-12-19</text>
<path d="M755.7 486.4v2.700" stroke="#555" stroke-width=".6"/>
<path d="M786.1 486.4v2.700" stroke="#555" stroke-width=".6"/>
<text x="786.1" y="495.4" text-anchor="middle" font-size="6" letter-spacing="-.12" fill="#999">2020-12-21</text>
<path d="M177.7 486.4H786.1" stroke="#8a8df5" stroke-width="1" fill="none"/>
<path d="M177.7 486.4H786.1" stroke="#62c5d6" stroke-width="1.100" fill="none"/>
<circle cx="177.7" cy="486.4" r="1.100" fill="#fff" stroke="#62c5d6" stroke-width=".6"/>
<circle cx="208.1" cy="486.4" r="1.100" fill="#fff" stroke="#62c5d6" stroke-width=".6"/>
<circle cx="238.5" cy="486.4" r="1.100" fill="#fff" stroke="#62c5d6" stroke-width=".6"/>
<circle cx="269.0" cy="486.4" r="1.100" fill="#fff" stroke="#62c5d6" stroke-width=".6"/>
<circle cx="299.4" cy="486.4" r="1.100" fill="#fff" stroke="#62c5d6" stroke-width=".6"/>
<circle cx="329.8" cy="486.4" r="1.100" fill="#fff" stroke="#62c5d6" stroke-width=".6"/>
<circle cx="360.2" cy="486.4" r="1.100" fill="#fff" stroke="#62c5d6" stroke-width=".6"/>
<circle cx="390.6" cy="486.4" r="1.100" fill="#fff" stroke="#62c5d6" stroke-width=".6"/>
<circle cx="421.1" cy="486.4" r="1.100" fill="#fff" stroke="#62c5d6" stroke-width=".6"/>
<circle cx="451.5" cy="486.4" r="1.100" fill="#fff" stroke="#62c5d6" stroke-width=".6"/>
<circle cx="481.9" cy="486.4" r="1.100" fill="#fff" stroke="#62c5d6" stroke-width=".6"/>
<circle cx="512.3" cy="486.4" r="1.100" fill="#fff" stroke="#62c5d6" stroke-width=".6"/>
<circle cx="542.7" cy="486.4" r="1.100" fill="#fff" stroke="#62c5d6" stroke-width=".6"/>
<circle cx="573.2" cy="486.4" r="1.100" fill="#fff" stroke="#62c5d6" stroke-width=".6"/>
<circle cx="603.6" cy="486.4" r="1.100" fill="#fff" stroke="#62c5d6" stroke-width=".6"/>
<circle cx="634.0" cy="486.4" r="1.100" fill="#fff" stroke="#62c5d6" stroke-width=".6"/>
<circle cx="664.4" cy="486.4" r="1.100" fill="#fff" stroke="#62c5d6" stroke-width=".6"/>
<circle cx="694.8" cy="486.4" r="1.100" fill="#fff" stroke="#62c5d6" stroke-width=".6"/>
<circle cx="725.3" cy="486.4" r="1.100" fill="#fff" stroke="#62c5d6" stroke-width=".6"/>
<circle cx="755.7" cy="486.4" r="1.100" fill="#fff" stroke="#62c5d6" stroke-width=".6"/>
<circle cx="786.1" cy="486.4" r="1.100" fill="#fff" stroke="#62c5d6" stroke-width=".6"/>
<path d="M177.7 485.6C175.7 481.4 169.7 478.4 169.7 471.9a8 8 0 0 1 16 0C185.7 478.4 179.7 481.4 177.7 485.6z" fill="#62c5d6"/>
<text x="177.7" y="474.2" text-anchor="middle" font-size="7" fill="#fff">0</text>
<path d="M430 354.200h13.300" stroke="#8a8df5" stroke-width=".7"/><circle cx="436.700" cy="354.200" r="2.900" fill="#fff" stroke="#8a8df5" stroke-width=".7"/>
<text x="445.800" y="356.600" font-size="6.500" fill="#333">流水资金</text>
<path d="M477.300 354.200h13.300" stroke="#62c5d6" stroke-width=".7"/><circle cx="484" cy="354.200" r="2.900" fill="#fff" stroke="#62c5d6" stroke-width=".7"/>
<text x="493.300" y="356.600" font-size="6.500" fill="#333">纯利润</text>
</svg>
</div>
<div class="card" id="notice" style="left:822.500px;top:316px;width:179.500px;height:186px">
 <div class="t" style="left:13.500px;top:17.800px;font-size:10px;font-weight:bold;color:#111">平台公告</div>
 <div class="t" style="left:59.800px;top:19px;font-size:7.450px;color:#dcdfea">Announcement</div>
 <div class="t" style="left:11.500px;top:44.7px;font-size:7.500px;letter-spacing:.45px;color:#9a9a9e">4年老平台平稳营运</div>
 <div class="abs" style="left:138.400px;top:44.3px;width:19.300px;height:7.800px;border-radius:1px;background:#f4604f"></div>
 <div class="t" style="left:139.500px;top:45.2px;font-size:6.800px;color:#fff;letter-spacing:0">NEW</div>
 <svg class="abs" style="left:162.400px;top:45.2px" width="3.700" height="6" viewBox="0 0 4 6.500"><path d="M.8 .8L3.200 3.250 .8 5.700" stroke="#888" stroke-width="1" fill="none"/></svg>
 <div class="abs" style="left:11.500px;top:58.2px;width:158px;height:1px;background:#f3f3f7"></div>
 <div class="t" style="left:11.500px;top:66.7px;font-size:7.500px;letter-spacing:.45px;color:#9a9a9e">关于自动提现到账时间通知必看</div>
 <div class="abs" style="left:138.400px;top:66.3px;width:19.300px;height:7.800px;border-radius:1px;background:#f4604f"></div>
 <div class="t" style="left:139.500px;top:67.2px;font-size:6.800px;color:#fff;letter-spacing:0">NEW</div>
 <svg class="abs" style="left:162.400px;top:67.2px" width="3.700" height="6" viewBox="0 0 4 6.500"><path d="M.8 .8L3.200 3.250 .8 5.700" stroke="#888" stroke-width="1" fill="none"/></svg>
 <div class="abs" style="left:11.500px;top:80.2px;width:158px;height:1px;background:#f3f3f7"></div>
 <div class="t" style="left:11.500px;top:88.7px;font-size:7.500px;letter-spacing:.45px;color:#9a9a9e">关于提现手续费通知必看</div>
 <div class="abs" style="left:138.400px;top:88.3px;width:19.300px;height:7.800px;border-radius:1px;background:#f4604f"></div>
 <div class="t" style="left:139.500px;top:89.2px;font-size:6.800px;color:#fff;letter-spacing:0">NEW</div>
 <svg class="abs" style="left:162.400px;top:89.2px" width="3.700" height="6" viewBox="0 0 4 6.500"><path d="M.8 .8L3.200 3.250 .8 5.700" stroke="#888" stroke-width="1" fill="none"/></svg>
</div>
<div class="card" id="orders" style="left:130px;top:513.300px;width:681.500px;height:60px">
 <div class="t" style="left:13px;top:17.800px;font-size:10px;font-weight:bold;color:#111">最新订单</div>
 <div class="t" style="left:59.300px;top:19.200px;font-size:7.450px;color:#dcdfea">Order</div>
 <div class="abs" style="left:634px;top:13.700px;width:38px;height:13.400px;border-radius:7px;background:#fff;box-shadow:0 0 2.200px rgba(120,125,160,.22)"></div>
 <div class="t" style="left:642.5px;top:16.500px;font-size:7.500px;color:#999">更多<svg style="margin-left:4.300px;vertical-align:-.3px" width="3.500" height="6" viewBox="0 0 3.500 6"><path d="M.7 .8L2.800 3 .7 5.200" stroke="#999" stroke-width=".9" fill="none"/></svg></div>
</div>
<div class="card" id="loginlog" style="left:822.500px;top:513.300px;width:179.500px;height:60px">
 <div class="t" style="left:13.500px;top:17.800px;font-size:10px;font-weight:bold;color:#111">登录日志</div>
 <div class="t" style="left:59.800px;top:19.200px;font-size:7.450px;color:#dcdfea">Login Log</div>
 <div class="abs" style="left:131.5px;top:13.700px;width:38px;height:13.400px;border-radius:7px;background:#fff;box-shadow:0 0 2.200px rgba(120,125,160,.22)"></div>
 <div class="t" style="left:140px;top:16.500px;font-size:7.500px;color:#999">更多<svg style="margin-left:4.300px;vertical-align:-.3px" width="3.500" height="6" viewBox="0 0 3.500 6"><path d="M.7 .8L2.800 3 .7 5.200" stroke="#999" stroke-width=".9" fill="none"/></svg></div>
</div>
<div class="abs" id="vscroll" style="left:1014.500px;top:54px;width:9.500px;height:499px;background:#f0f0f0">
 <svg class="abs" style="left:2.300px;top:3.500px" width="4.400" height="3.500" viewBox="0 0 5 4"><path d="M0 3.500L2.500 .8 5 3.500z" fill="#5a5a5a"/></svg>
 <div class="abs" style="left:.8px;top:10.500px;width:8.500px;height:348px;border:1px solid #b4b4b4;border-left-color:#d0d0d0;border-radius:2px;background:linear-gradient(90deg,#fafafa,#e4e4e4 50%,#cecece)"></div>
 <div class="abs" style="left:3px;top:182.500px;width:3.500px;height:.8px;background:#8e8e8e"></div><div class="abs" style="left:3px;top:184px;width:3.500px;height:.8px;background:#8e8e8e"></div><div class="abs" style="left:3px;top:185.500px;width:3.500px;height:.8px;background:#8e8e8e"></div>
 <svg class="abs" style="left:2.300px;top:492.500px" width="4.400" height="3.500" viewBox="0 0 5 4"><path d="M0 .5L2.500 3.200 5 .5z" fill="#5a5a5a"/></svg>
</div>
<div class="abs" style="left:0;top:17px;width:1.200px;height:536px;background:linear-gradient(90deg,#8f9199,rgba(190,190,196,.5))"></div>
<div class="abs" style="left:1023.500px;top:17px;width:.5px;height:536px;background:#8c9bb0"></div>
<div class="abs" id="taskbar">
 <div class="abs" style="left:0;top:0;width:1024px;height:.8px;background:#8593a6"></div>
 <div class="abs" style="left:8px;top:1.800px;width:13px;height:13px;border-radius:50%;border:1px solid #dfe8f2;background:#7e98b8"></div>
 <div class="abs" style="left:47px;top:2px;width:8px;height:8px;border-radius:50%;border:1.500px solid #f2c21a"></div>
 <div class="abs" style="left:64.500px;top:.8px;width:32px;height:8px;border:1px solid #5c6c82;border-radius:2px 2px 0 0;background:#dfe8f3"></div>
 <div class="abs" style="left:73px;top:2.300px;width:16px;height:8px;border-radius:5px 5px 0 0;background:#fff"></div>
 <div class="abs" style="left:98px;top:.8px;width:32px;height:8px;border:1px solid #5c6c82;border-radius:2px 2px 0 0;background:#c3d2e4"></div>
 <div class="abs" style="left:131.500px;top:.8px;width:32px;height:8px;border:1px solid #5c6c82;border-radius:2px 2px 0 0;background:#c3d2e4"></div>
 <div class="abs" style="left:164.500px;top:.8px;width:32px;height:8px;border:1px solid #5c6c82;border-radius:2px 2px 0 0;background:#c3d2e4"></div>
 <div class="abs" style="left:197.500px;top:.8px;width:31px;height:8px;border:1px solid #5c6c82;border-radius:2px 2px 0 0;background:#c3d2e4"></div>
 <div class="abs" style="left:106px;top:3.200px;width:10px;height:4px;background:#c9b58c"></div>
 <div class="abs" style="left:145px;top:3px;width:5px;height:4px;background:#f2d21a"></div>
 <div class="abs" style="left:175px;top:2.500px;width:9px;height:9px;border-radius:50%;background:#d8382c"></div>
 <div class="abs" style="left:209px;top:3px;width:6px;height:4px;background:#c8e08a"></div>
</div>
</body>
</html>
